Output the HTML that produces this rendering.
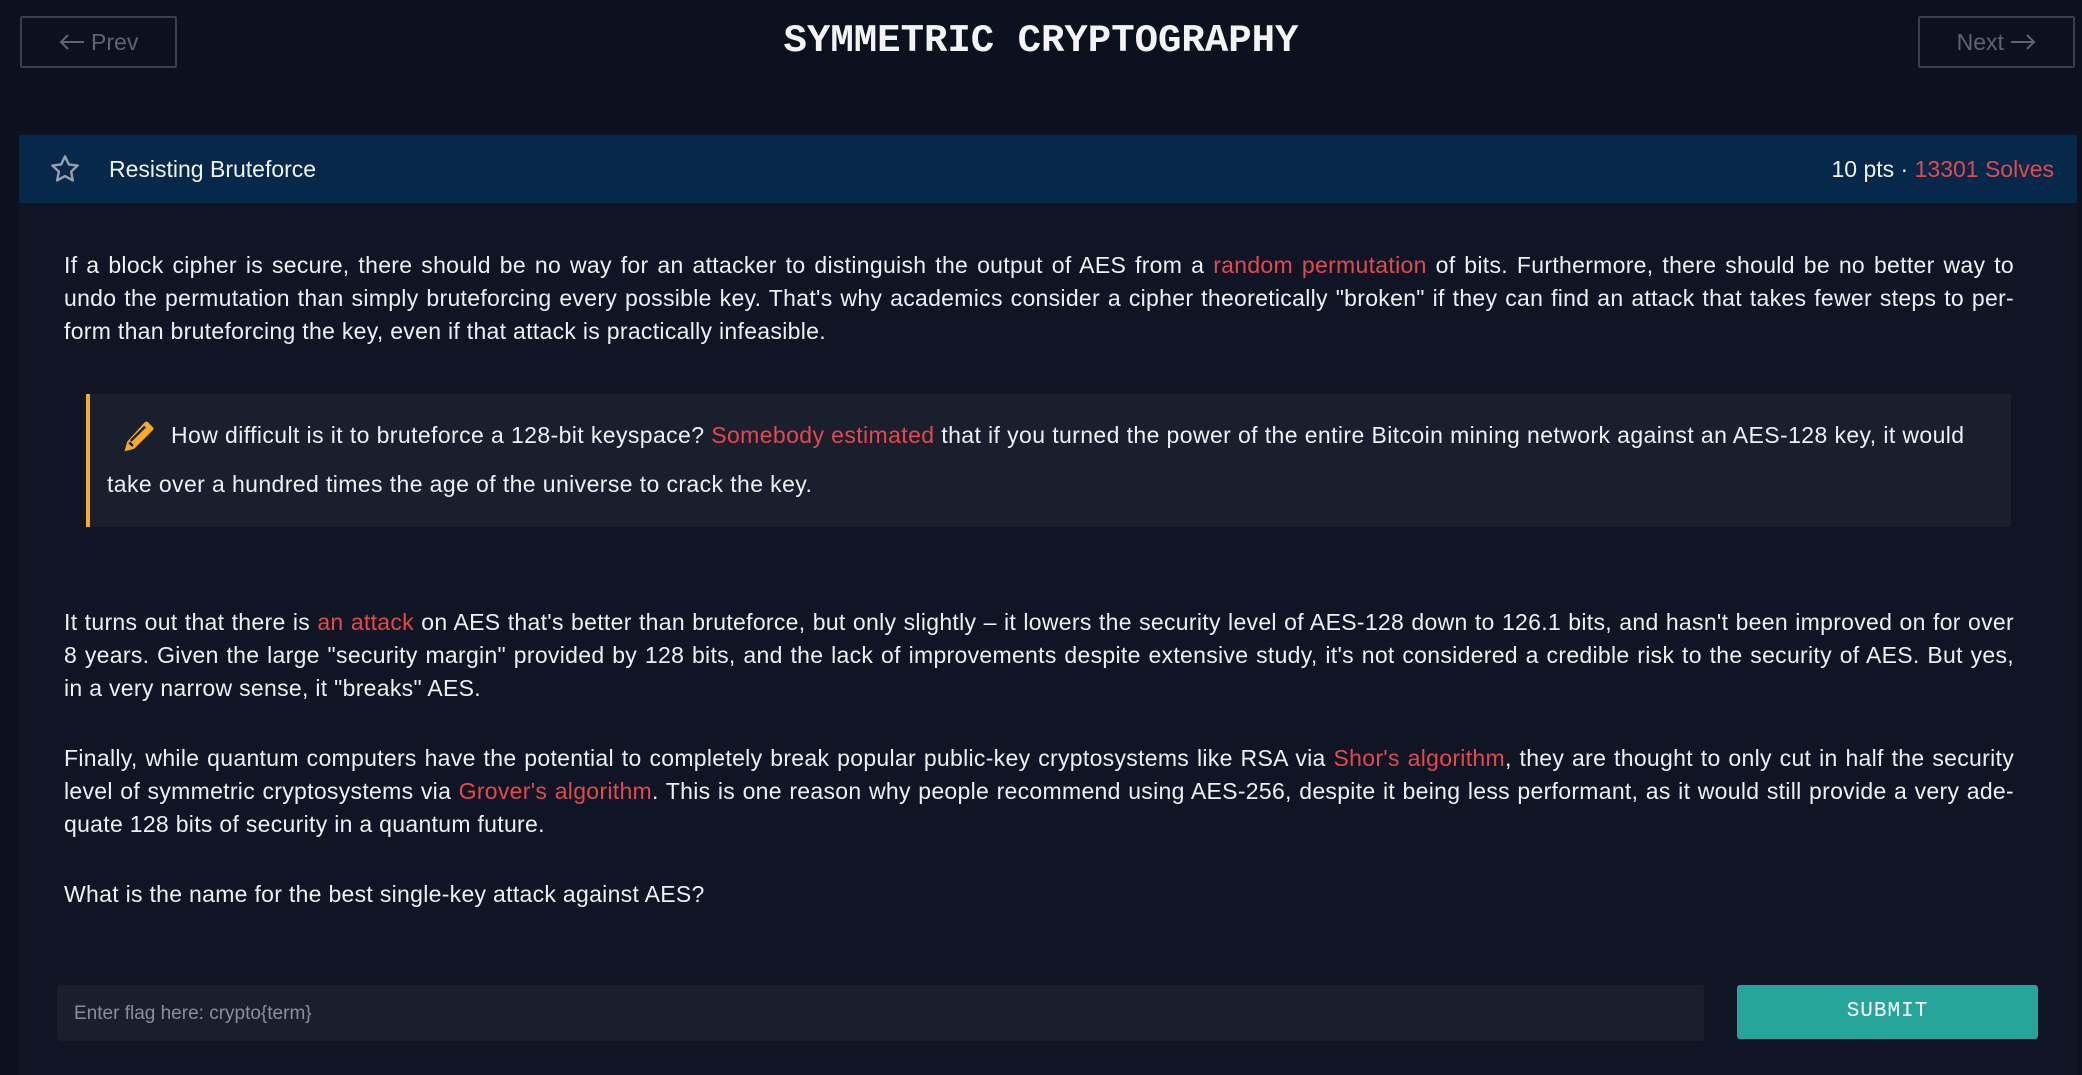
<!DOCTYPE html>
<html><head><meta charset="utf-8">
<style>
*{margin:0;padding:0;box-sizing:border-box}
html,body{width:2082px;height:1061px;overflow:hidden;background:#0c1120;font-family:"Liberation Sans",sans-serif;color:#eef0f3}
.btn{position:absolute;top:16px;height:52px;width:157px;border:2px solid #3a3f49;border-radius:2px;color:#5f6570;font-size:23px;line-height:48px;text-align:center}
.btn svg{vertical-align:middle;margin-top:-3px}
h1{position:absolute;top:19px;left:0;width:2082px;text-align:center;font-family:"Liberation Mono",monospace;font-weight:bold;font-size:39px;color:#f4f4f4}
.card{position:absolute;left:19px;top:135px;width:2058px;height:940px;background:#0f1524}
.head{position:absolute;left:0;top:0;width:2058px;height:68px;background:#06284a}
.head .t{position:absolute;left:90px;top:21px;font-size:23px;color:#f2f2f2}
.head .r{position:absolute;right:23px;top:21px;font-size:23px;color:#f2f2f2}
.red{color:#e5484d}
.p{position:absolute;left:45px;width:1950px;font-size:23px;line-height:33px;letter-spacing:0.3px}
.l{display:block;text-align:justify;text-align-last:justify;white-space:nowrap}
.l.e{text-align-last:left}
.bq{position:absolute;left:67px;top:259px;width:1925px;height:133px;background:#1a1f2e;border-left:4px solid #f7a928;letter-spacing:0.4px}
.in{position:absolute;left:38px;top:850px;width:1647px;height:56px;background:#1a1f2e;border-radius:3px;color:#8a8f99;font-size:19px;line-height:58px;padding-left:17px}
.sb{position:absolute;left:1718px;top:850px;width:301px;height:54px;background:#26a59a;border-radius:3px;color:#fff;font-family:"Liberation Mono",monospace;font-size:21px;line-height:54px;text-align:center;letter-spacing:1px}
</style></head><body>
<div class="btn" style="left:20px"><svg width="26" height="16" viewBox="0 0 26 16"><path d="M25 8H2M9 1L2 8l7 7" fill="none" stroke="#5f6570" stroke-width="2"/></svg> Prev</div>
<h1>SYMMETRIC CRYPTOGRAPHY</h1>
<div class="btn" style="left:1918px">Next <svg width="26" height="16" viewBox="0 0 26 16"><path d="M1 8h23M17 1l7 7-7 7" fill="none" stroke="#5f6570" stroke-width="2"/></svg></div>
<div class="card">
 <div class="head">
  <svg style="position:absolute;left:30px;top:18px" width="32" height="32" viewBox="0 0 24 24"><path d="M12 2.5l2.9 6.1 6.6.8-4.9 4.6 1.3 6.6L12 17.3l-5.9 3.3 1.3-6.6-4.9-4.6 6.6-.8z" fill="none" stroke="#9aa0aa" stroke-width="1.8" stroke-linejoin="round"/></svg>
  <div class="t">Resisting Bruteforce</div>
  <div class="r">10 pts · <span class="red">13301 Solves</span></div>
 </div>
 <div class="p" style="top:114px">
  <span class="l">If a block cipher is secure, there should be no way for an attacker to distinguish the output of AES from a <span class="red">random permutation</span> of bits. Furthermore, there should be no better way to</span>
  <span class="l">undo the permutation than simply bruteforcing every possible key. That's why academics consider a cipher theoretically "broken" if they can find an attack that takes fewer steps to per-</span>
  <span class="l e">form than bruteforcing the key, even if that attack is practically infeasible.</span>
 </div>
 <div class="bq">
  <svg style="position:absolute;left:30px;top:25px" width="36" height="36" viewBox="0 0 24 24"><path d="M16.5 2.2a1.6 1.6 0 0 1 2.2 0l3.1 3.1a1.6 1.6 0 0 1 0 2.2L9.5 19.8 3 21.6l1.8-6.5z" fill="#f7a928"/><path d="M6.2 15.6l2.4 2.4M7.2 14.6l9.5-9.5" stroke="#1a1f2e" stroke-width="1.6"/></svg>
  <div style="position:absolute;left:81px;top:25px;font-size:23px;line-height:33px;color:#eef0f3;white-space:nowrap">How difficult is it to bruteforce a 128-bit keyspace? <span class="red">Somebody estimated</span> that if you turned the power of the entire Bitcoin mining network against an AES-128 key, it would</div>
  <div style="position:absolute;left:17px;top:74px;font-size:23px;line-height:33px;white-space:nowrap">take over a hundred times the age of the universe to crack the key.</div>
 </div>
 <div class="p" style="top:471px">
  <span class="l">It turns out that there is <span class="red">an attack</span> on AES that's better than bruteforce, but only slightly – it lowers the security level of AES-128 down to 126.1 bits, and hasn't been improved on for over</span>
  <span class="l">8 years. Given the large "security margin" provided by 128 bits, and the lack of improvements despite extensive study, it's not considered a credible risk to the security of AES. But yes,</span>
  <span class="l e">in a very narrow sense, it "breaks" AES.</span>
 </div>
 <div class="p" style="top:607px">
  <span class="l">Finally, while quantum computers have the potential to completely break popular public-key cryptosystems like RSA via <span class="red">Shor's algorithm</span>, they are thought to only cut in half the security</span>
  <span class="l">level of symmetric cryptosystems via <span class="red">Grover's algorithm</span>. This is one reason why people recommend using AES-256, despite it being less performant, as it would still provide a very ade-</span>
  <span class="l e">quate 128 bits of security in a quantum future.</span>
 </div>
 <div class="p" style="top:743px"><span class="l e">What is the name for the best single-key attack against AES?</span></div>
 <div class="in">Enter flag here: crypto{term}</div>
 <div class="sb">SUBMIT</div>
</div>
</body></html>
